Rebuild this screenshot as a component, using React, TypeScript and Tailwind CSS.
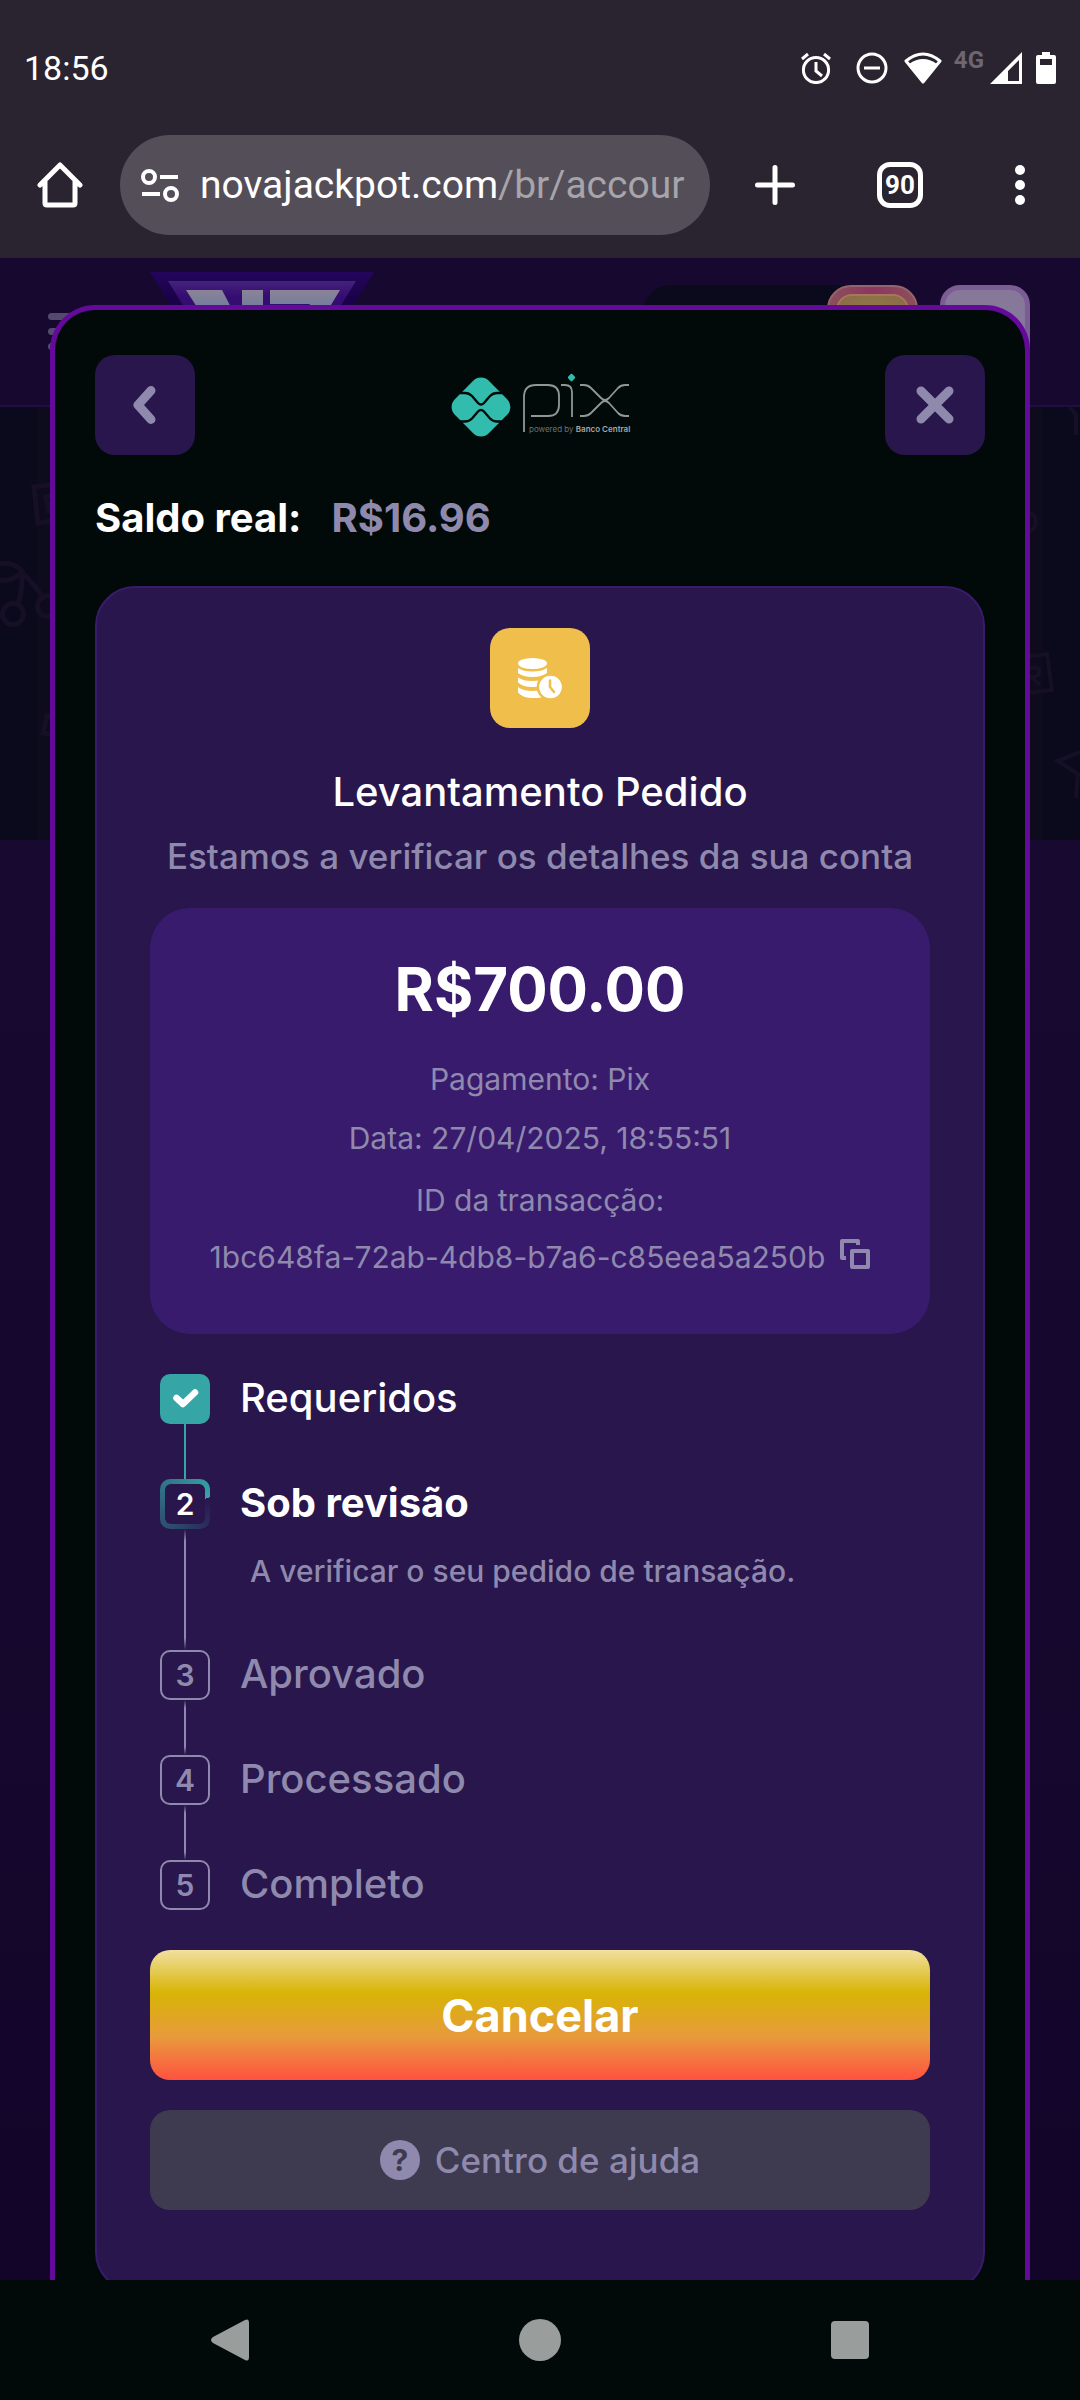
import React from "react";

type StepState = "done" | "active" | "pending";

const steps: { n: number; label: string; state: StepState; note?: string }[] = [
  { n: 1, label: "Requeridos", state: "done" },
  { n: 2, label: "Sob revisão", state: "active", note: "A verificar o seu pedido de transação." },
  { n: 3, label: "Aprovado", state: "pending" },
  { n: 4, label: "Processado", state: "pending" },
  { n: 5, label: "Completo", state: "pending" },
];

function StatusBar() {
  return (
    <div className="flex h-[132px] items-center justify-between px-6 pt-1 font-['Roboto',sans-serif] text-white">
      <span className="text-[34px] leading-none">18:56</span>
      <div className="flex items-center">
        <svg width="32" height="32" viewBox="0 0 32 32" fill="none" stroke="#fff" strokeWidth="3">
          <circle cx="16" cy="18" r="12.6" />
          <path d="M16 10v9l6 5M2 7l6-5M30 7l-6-5" />
        </svg>
        <svg className="ml-6" width="32" height="32" viewBox="0 0 32 32" fill="none" stroke="#fff" strokeWidth="3">
          <circle cx="16" cy="16" r="14" />
          <path d="M8 16h16" />
        </svg>
        <svg className="ml-4" width="38" height="32" viewBox="0 0 38 32">
          <path d="M2 9Q19-5 36 9L19 30Z" fill="none" stroke="#fff" strokeWidth="3" strokeLinejoin="round" />
          <path d="M5 12Q19 2 33 12L19 31Z" fill="#fff" />
        </svg>
        <span className="mb-4 ml-3 text-2xl leading-none font-bold text-[#6b6671]">4G</span>
        <svg className="ml-1.5" width="32" height="32" viewBox="0 0 32 32">
          <path d="M32 0v32H0ZM29 8L18 19v10h11Z" fill="#fff" fillRule="evenodd" />
        </svg>
        <svg className="ml-3.5" width="20" height="32" viewBox="0 0 20 32">
          <path d="M6 0h8v3h4q2 0 2 2v25q0 2-2 2H2q-2 0-2-2V5q0-2 2-2h4ZM4 7v6h12V7Z" fill="#fff" fillRule="evenodd" />
        </svg>
      </div>
    </div>
  );
}

function BrowserBar() {
  return (
    <div className="flex h-[126px] items-start px-[37px] pt-[3px] font-['Roboto',sans-serif] text-white">
      <button aria-label="Início" className="flex h-[100px] items-center">
        <svg width="46" height="46" viewBox="0 0 46 46" fill="none" stroke="#fff" strokeWidth="5" strokeLinecap="round" strokeLinejoin="round">
          <path d="M3 23L23 3l20 20M8 19v22q0 2 2 2h26q2 0 2-2V19" />
        </svg>
      </button>
      <div className="ml-[37px] flex h-[100px] min-w-0 flex-1 items-center rounded-full bg-[#534e58] pr-4 pl-5">
        <svg className="shrink-0" width="40" height="34" viewBox="0 0 40 34" fill="none" stroke="#fff" strokeWidth="4">
          <circle cx="9" cy="9" r="6" />
          <circle cx="31" cy="26" r="6" />
          <path d="M20 9h18M2 26h18" />
        </svg>
        <div className="ml-5 min-w-0 flex-1 overflow-hidden text-[39px] leading-[54px] whitespace-nowrap">
          novajackpot.com<span className="text-[#a7a4aa]">/br/accour</span>
        </div>
      </div>
      <button aria-label="Nova aba" className="ml-[45px] flex h-[100px] items-center">
        <svg width="40" height="40" viewBox="0 0 40 40" stroke="#fff" strokeWidth="5" strokeLinecap="round">
          <path d="M20 2.5v35M2.5 20h35" />
        </svg>
      </button>
      <button aria-label="Abas" className="mt-[27px] ml-[82px] flex size-[46px] items-center justify-center rounded-[13px] border-5 border-white text-[26px] leading-none font-bold">
        90
      </button>
      <button aria-label="Menu" className="mr-[18px] ml-[92px] flex h-[100px] items-center">
        <svg width="10" height="42" viewBox="0 0 10 42" fill="#fff">
          <circle cx="5" cy="6" r="5" />
          <circle cx="5" cy="21" r="5" />
          <circle cx="5" cy="36" r="5" />
        </svg>
      </button>
    </div>
  );
}

function SiteBackdrop() {
  return (
    <div aria-hidden="true" className="absolute inset-0 flex flex-col bg-linear-to-b from-[#1a0b33] to-[#13052a]">
      <div className="flex h-[149px] items-start justify-between border-b-2 border-[#1f0d44] bg-[#16082e] pr-[50px] pl-12">
        <div className="flex">
          <div className="mt-[55px] flex w-10 flex-col gap-2">
            <div className="h-[7px] rounded-full bg-[#544a70]" />
            <div className="h-[7px] rounded-full bg-[#544a70]" />
            <div className="h-[7px] rounded-full bg-[#544a70]" />
          </div>
          <svg className="mt-3.5 ml-[62px]" width="224" height="90" viewBox="0 0 224 90">
            <defs>
              <linearGradient id="edge" x1="0" y1="0" x2="0" y2="1">
                <stop offset="0" stopColor="#23065c" />
                <stop offset=".3" stopColor="#1b0149" />
              </linearGradient>
              <linearGradient id="face" x1="0" y1="0" x2="0" y2="1">
                <stop offset="0" stopColor="#43227c" />
                <stop offset=".2" stopColor="#350c70" />
              </linearGradient>
              <linearGradient id="glyph" x1="0" y1="0" x2="0" y2="1">
                <stop offset="0" stopColor="#8b8498" />
                <stop offset=".3" stopColor="#757d9c" />
              </linearGradient>
            </defs>
            <path d="M0 0h224l-56 90H56Z" fill="url(#edge)" />
            <path d="M18 9h188l-50 81H68Z" fill="url(#face)" />
            <path d="M36 18h36l26 50H68ZM92 18h21v50H92ZM120 18h70l-24 40h-20l14-26h-40Z" fill="url(#glyph)" />
          </svg>
        </div>
        <div className="mt-[27px] flex">
          <div className="flex h-[90px] w-[275px] justify-end rounded-[28px] bg-[#0b0a1c]">
            <div className="w-[91px] rounded-[24px] border-2 border-[#94646c] bg-linear-to-r from-[#8a5058] via-[#8c3560] to-[#8a5058] p-[7px]">
              <div className="h-full rounded-[16px] border-2 border-[#a8765c] bg-radial from-[#93804c] to-[#8a6a44]" />
            </div>
          </div>
          <div className="ml-[22px] h-[90px] w-[90px] rounded-[20px] border-5 border-[#7b5c94] bg-[#857899]" />
        </div>
      </div>
      <div className="flex h-[433px] justify-between bg-[#0b0a1c]">
        <svg width="60" height="433" viewBox="0 0 60 433" fill="none" stroke="#160f26" strokeWidth="5">
          <rect x="37" y="0" width="23" height="433" fill="#0e0b1d" stroke="none" />
          <path d="M56 77l-22 3 4 36 22-3M56 88l-10 2 3 16M0 157q12-3 22 7-8 11-22 9M22 166q0 22-4 31M22 166q14 12 22 27M55 310l-8-1-4 17 12 2" />
          <circle cx="13" cy="207" r="10.5" />
          <circle cx="48" cy="199" r="10.5" />
        </svg>
        <svg width="60" height="433" viewBox="0 0 60 433" fill="none" stroke="#160f26" strokeWidth="4">
          <rect x="0" y="0" width="23" height="433" fill="#0e0b1d" stroke="none" />
          <path d="M4 250l23-3 5 36-25 3M10 262q8-4 9 2t-8 6l9 8M60 345l-22 9 20 13-2 24M50 0l6 8v20" />
          <circle cx="6" cy="115" r="10" />
        </svg>
      </div>
    </div>
  );
}

function PixLogo() {
  return (
    <svg className="overflow-visible" role="img" aria-label="Pix powered by Banco Central" width="180" height="66" viewBox="0 0 180 66">
      <rect x="7" y="11" width="48" height="48" rx="11" transform="rotate(45 31 35)" fill="#32bcad" />
      <path
        d="M10 21h5q4 0 7 3l6 7q3 3 6 0l6-7q3-3 7-3h5M10 49.5h5q4 0 7-3l6-7q3-3 6 0l6 7q3 3 7 3h5"
        fill="none"
        stroke="#020a09"
        strokeWidth="2.4"
      />
      <path
        d="M74 60V25q0-12 12-12h12q11 0 11 11v9q0 11-11 11H81M111 13h4q7 0 7 7v25M130 13h4q4 0 7 3l10 10q4 4 8 0l9-10q3-3 7-3h4M130 44h4q4 0 7-3l10-10q4-4 8 0l9 10q3 3 7 3h4"
        fill="none"
        stroke="#939697"
        strokeWidth="1.8"
      />
      <rect x="118.5" y="2.5" width="6" height="6" rx="1.5" transform="rotate(45 121.5 5.5)" fill="#32bcad" />
      <text x="79" y="60" fontFamily="Inter, sans-serif" fontSize="8" fill="#6d7171">
        powered by <tspan fontWeight="600" fill="#a5a8a8">Banco Central</tspan>
      </text>
    </svg>
  );
}

function CoinsClock() {
  return (
    <svg width="44" height="42" viewBox="0 0 44 42" fill="#fff">
      <ellipse cx="14.5" cy="6.5" rx="14.5" ry="5.5" />
      <path d="M0 11Q5 14.5 14.5 14.5T29 11v5Q24 20 14.5 20T0 16Z" />
      <path d="M0 20.5Q5 24 14.5 24T29 20.5v5Q24 30 14.5 30T0 25.5Z" />
      <path d="M0 30Q5 34 14.5 34T29 30v9Q24 41 14.5 41T0 35.5Z" />
      <circle cx="32.5" cy="30" r="13.8" fill="#f0be4a" />
      <circle cx="32.5" cy="30" r="11.3" />
      <path d="M32 23.5v6.5l4 5" fill="none" stroke="#f0be4a" strokeWidth="2.5" strokeLinecap="round" strokeLinejoin="round" />
    </svg>
  );
}

function StepBadge({ n, state }: { n: number; state: StepState }) {
  if (state === "done") {
    return (
      <div className="flex size-[50px] items-center justify-center rounded-[10px] bg-[#35a5a6]">
        <svg width="28" height="24" viewBox="0 0 28 24" fill="none" stroke="#fff" strokeWidth="6.5" strokeLinecap="round" strokeLinejoin="round">
          <path d="M5.5 11l6.5 6L24 5.5" />
        </svg>
      </div>
    );
  }
  if (state === "active") {
    return (
      <div className="size-[50px] rounded-[10px] bg-[conic-gradient(from_75deg,#28164c,#35a5a6)] p-[5px]">
        <div className="flex h-full items-center justify-center rounded-[6px] bg-[#28164c] text-[30px] leading-none font-semibold text-white">{n}</div>
      </div>
    );
  }
  return (
    <div className="flex size-[50px] items-center justify-center rounded-[10px] border-2 border-[#8f8aad] text-[30px] leading-none font-semibold text-[#8f8aad]">{n}</div>
  );
}

const labelTone: Record<StepState, string> = {
  done: "font-medium text-white",
  active: "font-bold text-white",
  pending: "font-medium text-[#8f8aad]",
};

const lineTone: Record<StepState, string> = {
  done: "bg-[#35a5a6]",
  active: "bg-[linear-gradient(transparent,#8f8aad_10%,#8f8aad_90%,transparent)]",
  pending: "bg-[linear-gradient(transparent,#8f8aad_15%,#8f8aad_85%,transparent)]",
};

function Steps() {
  return (
    <ol className="mt-10 px-2.5">
      {steps.map((s, i) => (
        <li key={s.n} className="flex gap-[30px]">
          <div className="flex flex-col items-center">
            <StepBadge n={s.n} state={s.state} />
            {i < steps.length - 1 && <div className={"min-h-[55px] w-0.5 flex-1 " + lineTone[s.state]} />}
          </div>
          <div>
            <div className={"text-[40px] leading-[48px] " + labelTone[s.state]}>{s.label}</div>
            {s.note && <p className="mt-[26px] mb-[61px] ml-2.5 text-[30px] leading-9 font-medium text-[#8f8aad]">{s.note}</p>}
          </div>
        </li>
      ))}
    </ol>
  );
}

function WithdrawDialog() {
  return (
    <div role="dialog" aria-label="Levantamento" className="relative mx-[50px] mt-[47px] rounded-t-[45px] border-5 border-b-0 border-[#640a9b] bg-[#020a09] px-10 pt-[45px] pb-10">
      <div className="flex items-center justify-between">
        <button aria-label="Voltar" className="flex size-[100px] items-center justify-center rounded-[20px] bg-[#28164c]">
          <svg width="24" height="40" viewBox="0 0 24 40" fill="none" stroke="#8f8aad" strokeWidth="9" strokeLinecap="round" strokeLinejoin="round">
            <path d="M18 5.5L5 20l13 14.5" />
          </svg>
        </button>
        <PixLogo />
        <button aria-label="Fechar" className="flex size-[100px] items-center justify-center rounded-[20px] bg-[#28164c]">
          <svg width="38" height="38" viewBox="0 0 38 38" stroke="#8f8aad" strokeWidth="9" strokeLinecap="round">
            <path d="M5 5l28 28M33 5L5 33" />
          </svg>
        </button>
      </div>

      <div className="mt-[37px] flex gap-[30px] text-[40px] leading-[52px] font-bold">
        <span className="text-white">Saldo real:</span>
        <span className="text-[#8f8aad]">R$16.96</span>
      </div>

      <section className="mt-[42px] rounded-[40px] border-2 border-[#381b6d] bg-[#28164c] px-[53px] pt-10 pb-20">
        <div className="mx-auto flex size-[100px] items-center justify-center rounded-[20px] bg-[#f0be4a]">
          <CoinsClock />
        </div>
        <h1 className="mt-[39px] text-center text-[40px] leading-[50px] font-medium text-white">Levantamento Pedido</h1>
        <p className="mt-4 text-center text-[35px] leading-[46px] font-medium text-[#8f8aad]">Estamos a verificar os detalhes da sua conta</p>

        <div className="mt-[29px] rounded-[40px] bg-[#381b6d] pt-[43px] pb-12 text-center text-[30px] leading-[59px] text-[#8f8aad]">
          <p className="mb-[23px] text-[60px] leading-[76px] font-bold text-white">R$700.00</p>
          <p>Pagamento: Pix</p>
          <p>Data: 27/04/2025, 18:55:51</p>
          <div className="mt-1 leading-[57px]">
            <p>ID da transacção:</p>
            <p className="flex items-center justify-center gap-[15px]">
              <span>1bc648fa-72ab-4db8-b7a6-c85eea5a250b</span>
              <button aria-label="Copiar ID">
                <svg className="mb-2" width="30" height="30" viewBox="0 0 30 30" fill="none" stroke="#8f8aad" strokeWidth="4" strokeLinejoin="round">
                  <path d="M18 6V2H2v17h4" />
                  <rect x="12" y="12" width="16" height="16" />
                </svg>
              </button>
            </p>
          </div>
        </div>

        <Steps />

        <button className="mt-10 h-[130px] w-full rounded-[20px] bg-[linear-gradient(#f1e0a0,#d7b405_33%,#e89a3c_67%,#ff5240)] text-[45px] leading-none font-bold text-white">
          Cancelar
        </button>
        <button className="mt-[30px] flex h-[100px] w-full items-center justify-center gap-[15px] rounded-[20px] bg-[#3e3a50] text-[35px] leading-none font-medium text-[#8f8aad]">
          <span className="flex size-10 items-center justify-center rounded-full bg-[#8f8aad] text-[30px] font-bold text-[#3e3a50]">?</span>
          Centro de ajuda
        </button>
      </section>
    </div>
  );
}

function SystemNav() {
  return (
    <nav className="h-[120px] shrink-0 bg-[#020a09]">
      <div className="mx-auto flex h-full w-[61%] items-center justify-between">
        <button aria-label="Voltar do sistema">
          <svg width="38" height="42" viewBox="0 0 38 42" fill="#999d9c">
            <path d="M34 1q4-2 4 3v34q0 5-4 3L2 24q-4-3 0-6Z" />
          </svg>
        </button>
        <button aria-label="Tela inicial" className="size-[42px] rounded-full bg-[#999d9c]" />
        <button aria-label="Recentes" className="size-[38px] rounded-[4px] bg-[#999d9c]" />
      </div>
    </nav>
  );
}

export default function App() {
  return (
    <div className="flex h-screen flex-col overflow-hidden bg-[#020a09] font-['Inter',sans-serif]">
      <header className="shrink-0 bg-[#2a2430]">
        <StatusBar />
        <BrowserBar />
      </header>
      <main className="relative min-h-0 flex-1 overflow-hidden">
        <SiteBackdrop />
        <div className="relative h-full overflow-y-auto [scrollbar-width:none]">
          <WithdrawDialog />
        </div>
      </main>
      <SystemNav />
    </div>
  );
}
